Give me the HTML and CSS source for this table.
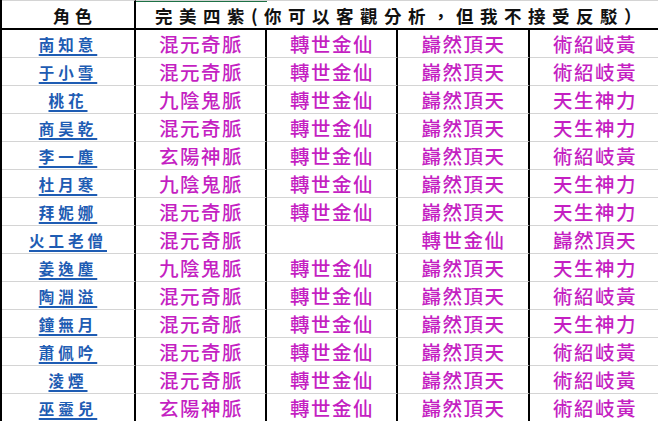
FILE: index.html
```html
<!DOCTYPE html>
<html lang="zh-Hant">
<head>
<meta charset="utf-8">
<link rel="stylesheet" href="styles.css">
</head>
<body>
<div class="sheet">
  <div class="hd c1">角色</div>
  <div class="hd span">完美四紫(你可以客觀分析，但我不接受反駁）</div>

  <div class="nm"><span>南知意</span></div><div class="v">混元奇脈</div><div class="v">轉世金仙</div><div class="v">巋然頂天</div><div class="v last">術紹岐黃</div>
  <div class="nm"><span>于小雪</span></div><div class="v">混元奇脈</div><div class="v">轉世金仙</div><div class="v">巋然頂天</div><div class="v last">術紹岐黃</div>
  <div class="nm"><span>桃花</span></div><div class="v">九陰鬼脈</div><div class="v">轉世金仙</div><div class="v">巋然頂天</div><div class="v last">天生神力</div>
  <div class="nm"><span>商昊乾</span></div><div class="v">混元奇脈</div><div class="v">轉世金仙</div><div class="v">巋然頂天</div><div class="v last">天生神力</div>
  <div class="nm"><span>李一塵</span></div><div class="v">玄陽神脈</div><div class="v">轉世金仙</div><div class="v">巋然頂天</div><div class="v last">術紹岐黃</div>
  <div class="nm"><span>杜月寒</span></div><div class="v">九陰鬼脈</div><div class="v">轉世金仙</div><div class="v">巋然頂天</div><div class="v last">天生神力</div>
  <div class="nm"><span>拜妮娜</span></div><div class="v">混元奇脈</div><div class="v">轉世金仙</div><div class="v">巋然頂天</div><div class="v last">天生神力</div>
  <div class="nm"><span>火工老僧</span></div><div class="v">混元奇脈</div><div class="v"></div><div class="v">轉世金仙</div><div class="v last">巋然頂天</div>
  <div class="nm"><span>姜逸塵</span></div><div class="v">九陰鬼脈</div><div class="v">轉世金仙</div><div class="v">巋然頂天</div><div class="v last">天生神力</div>
  <div class="nm"><span>陶淵溢</span></div><div class="v">混元奇脈</div><div class="v">轉世金仙</div><div class="v">巋然頂天</div><div class="v last">術紹岐黃</div>
  <div class="nm"><span>鐘無月</span></div><div class="v">混元奇脈</div><div class="v">轉世金仙</div><div class="v">巋然頂天</div><div class="v last">天生神力</div>
  <div class="nm"><span>蕭佩吟</span></div><div class="v">混元奇脈</div><div class="v">轉世金仙</div><div class="v">巋然頂天</div><div class="v last">術紹岐黃</div>
  <div class="nm"><span>淩煙</span></div><div class="v">混元奇脈</div><div class="v">轉世金仙</div><div class="v">巋然頂天</div><div class="v last">術紹岐黃</div>
  <div class="nm"><span>巫靈兒</span></div><div class="v">玄陽神脈</div><div class="v">轉世金仙</div><div class="v">巋然頂天</div><div class="v last">術紹岐黃</div>
</div>
</body>
</html>
```

FILE: styles.css
```css
* { box-sizing: border-box; }
html, body { margin: 0; padding: 0; background: #ffffff; }
body { width: 658px; height: 421px; overflow: hidden; }

.sheet {
  display: grid;
  grid-template-columns: 134px 131px 131px 132px 130px;
  grid-template-rows: 30px;
  grid-auto-rows: 28px;
  border-left: 2px solid #000;
  width: 658px;
  font-family: "Noto Sans CJK TC", "Noto Sans CJK SC", sans-serif;
}

.sheet > div {
  display: flex;
  align-items: center;
  justify-content: center;
  border-right: 2px solid #000;
  border-bottom: 1px solid #d4d4d4;
  white-space: nowrap;
  overflow: hidden;
}
.sheet > div.last { border-right: 1px solid #e0e0e0; }

.hd {
  border-top: 1px solid #d4d4d4;
  border-bottom: 2px solid #000 !important;
  font-weight: 700;
  font-size: 17px;
  color: #111;
  padding-top: 1px;
}
.hd.c1 { letter-spacing: 5px; padding-left: 14px; }
.hd.span {
  grid-column: 2 / 6;
  letter-spacing: 6.5px;
  font-size: 17.5px;
  padding-left: 8px;
  border-right: 1px solid #e0e0e0 !important;
  background: linear-gradient(#1e7145, #1e7145) 0 0 / 131px 1px no-repeat;
}

.nm span {
  color: #1e5cb3;
  font-weight: 700;
  font-size: 15.5px;
  letter-spacing: 4px;
  margin-right: -4px;
  text-decoration: underline;
  text-decoration-thickness: 1.5px;
  text-underline-offset: 3px;
  padding-right: 4px;
}

.v {
  color: #c41fc2;
  font-size: 19.5px;
  font-weight: 500;
  letter-spacing: 1.5px;
  padding-left: 1px;
}
```
